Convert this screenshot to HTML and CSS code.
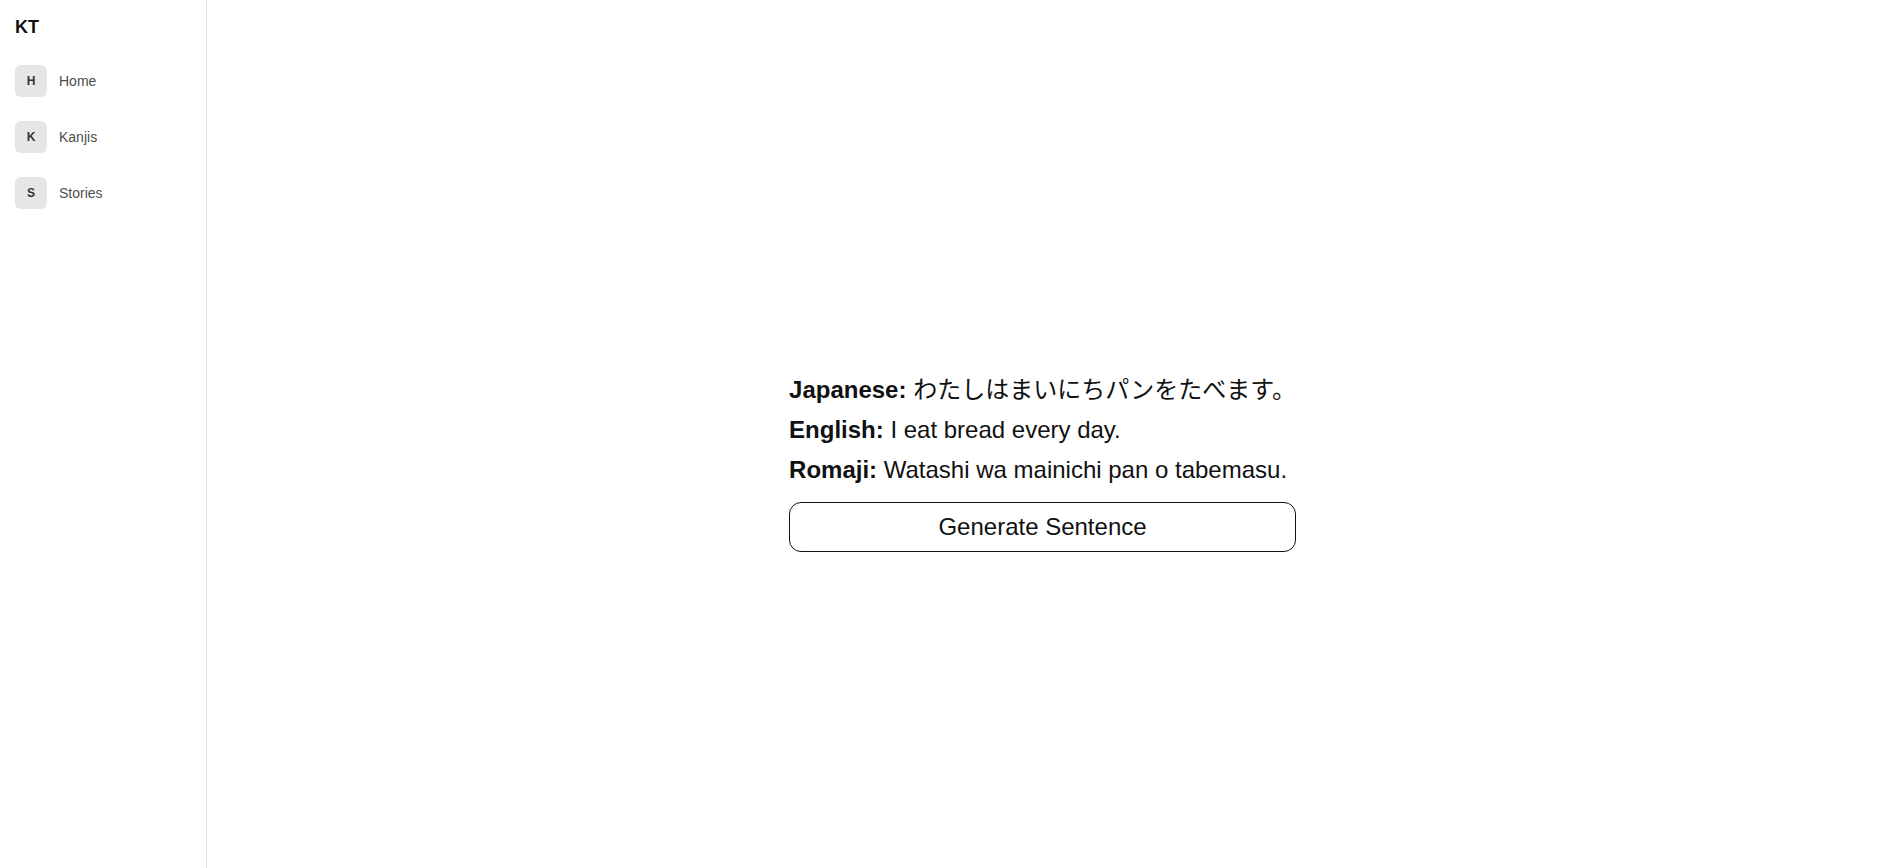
FILE: index.html
```html
<!DOCTYPE html>
<html lang="en">
<head>
<meta charset="utf-8">
<title>KT</title>
<link rel="stylesheet" href="styles.css">
</head>
<body>
<div class="app">
  <aside class="sidebar">
    <div class="brand">KT</div>
    <nav class="nav">
      <a class="nav-item" href="#"><span class="nav-icon">H</span><span class="nav-label">Home</span></a>
      <a class="nav-item" href="#"><span class="nav-icon">K</span><span class="nav-label">Kanjis</span></a>
      <a class="nav-item" href="#"><span class="nav-icon">S</span><span class="nav-label">Stories</span></a>
    </nav>
  </aside>
  <main class="main">
    <section class="sentence">
      <p class="line"><strong>Japanese:</strong> わたしはまいにちパンをたべます。</p>
      <p class="line"><strong>English:</strong> I eat bread every day.</p>
      <p class="line"><strong>Romaji:</strong> Watashi wa mainichi pan o tabemasu.</p>
      <button class="generate" type="button">Generate Sentence</button>
    </section>
  </main>
</div>
</body>
</html>
```

FILE: styles.css
```css
* { box-sizing: border-box; }
html, body { margin: 0; padding: 0; }
body {
  font-family: "Liberation Sans", Arial, "Noto Sans CJK JP", sans-serif;
  color: #111;
  background: #fff;
}
.app {
  display: flex;
  min-height: 100vh;
}
.sidebar {
  width: 207px;
  flex: 0 0 207px;
  border-right: 1px solid #e0e0e0;
  padding: 17px 15px 15px;
}
.brand {
  font-size: 18px;
  font-weight: 700;
  line-height: 21px;
  color: #111;
}
.nav {
  display: flex;
  flex-direction: column;
  gap: 24px;
  margin-top: 27px;
}
.nav-item {
  display: flex;
  align-items: center;
  gap: 12px;
  text-decoration: none;
  color: #4d4d4d;
  font-size: 14px;
}
.nav-icon {
  width: 32px;
  height: 32px;
  border-radius: 6px;
  background: #e6e6e6;
  display: flex;
  align-items: center;
  justify-content: center;
  font-size: 12px;
  font-weight: 700;
  color: #333;
}
.main {
  flex: 1;
  display: flex;
  align-items: center;
  justify-content: center;
  padding-top: 60px;
}
.sentence {
  display: flex;
  flex-direction: column;
  gap: 12px;
  width: max-content;
}
.line {
  margin: 0;
  font-size: 24px;
  line-height: 28px;
  color: #111;
  white-space: nowrap;
}
.line strong { font-weight: 700; }
.generate {
  margin-top: 6px;
  width: 100%;
  font-family: "Liberation Sans", Arial, sans-serif;
  font-size: 24px;
  line-height: 28px;
  padding: 10px 16px;
  background: #fff;
  color: #111;
  border: 1px solid #111;
  border-radius: 12px;
  cursor: pointer;
}
```
